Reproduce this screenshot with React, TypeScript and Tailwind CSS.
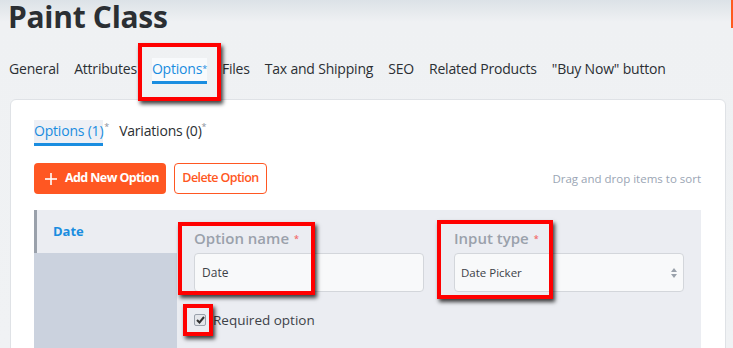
import type { ReactNode } from 'react'

// Top-level product tabs
const TABS = ['General', 'Attributes', 'Options', 'Files', 'Tax and Shipping', 'SEO', 'Related Products', '"Buy Now" button']

function RedBox({ className }: { className: string }) {
  return (
    <div
      className={`pointer-events-none absolute border-4 border-[#ff0000] shadow-[2px_3px_4px_rgba(0,0,0,0.75)] ${className}`}
    />
  )
}

function Field({ label, children }: { label: string; children: ReactNode }) {
  return (
    <div className="flex-1">
      <div className="flex items-center gap-[5px] text-[15px] font-semibold leading-[20px] text-[#9aa1ab]">
        {label}
        <span className="mt-[2px] text-[9px] leading-[10px] text-[#f26b6b]">*</span>
      </div>
      <div className="mt-[5px]">{children}</div>
    </div>
  )
}

export default function App() {
  return (
    <div
      className="relative h-[348px] w-[733px] overflow-hidden bg-[linear-gradient(#dce2e7_0px,#eff1f3_22px,#f0f2f4_100%)] font-['Open_Sans',sans-serif] text-[#2b2f33]"
    >
      {/* orange sliver on the right edge */}
      <div className="absolute right-0 top-0 h-[28px] w-[2px] bg-[#ff5a1f]" />

      <h1 className="ml-[8px] text-[30px] font-bold leading-[34px] tracking-[-0.3px] text-[#2b2f33]">
        Paint Class
      </h1>

      {/* product tabs */}
      <div className="ml-[9px] mt-[24px] flex items-end gap-[15px] text-[14px] tracking-[-0.2px] text-[#2b2f33]">
        {TABS.map((t) =>
          t === 'Options' ? (
            <div key={t} className="flex h-[26px] flex-col justify-between bg-[#f8fafc]">
              <span className="leading-[22px] text-[#1a8de0]">
                Options<span className="align-top text-[9px] text-[#1a8de0]">*</span>
              </span>
              <div className="h-[3px] bg-[#1a8de0]" />
            </div>
          ) : (
            <span key={t} className="pb-[4px] leading-[22px]">
              {t}
            </span>
          ),
        )}
      </div>

      {/* card */}
      <div className="ml-[10px] mt-[15px] h-[260px] w-[716px] rounded-[6px] border border-[#dfe2e6] bg-white pl-[23px] pr-[24px] pt-[20px]">
        {/* inner tabs */}
        <div className="flex items-end gap-[10px] text-[14px] tracking-[-0.2px]">
          <div className="flex items-start">
            <div className="flex h-[26px] flex-col justify-between bg-[#eef0f5]">
              <span className="leading-[22px] text-[#1a8de0]">Options (1)</span>
              <div className="h-[3px] bg-[#1a8de0]" />
            </div>
            <span className="ml-[1px] text-[9px] leading-[14px] text-[#8a929c]">*</span>
          </div>
          <div className="flex items-start pb-[4px]">
            <span className="leading-[22px]">Variations (0)</span>
            <span className="text-[9px] leading-[14px] text-[#8a929c]">*</span>
          </div>
        </div>

        {/* action buttons */}
        <div className="mt-[17px] flex items-center gap-[8px]">
          <button className="flex h-[31px] w-[132px] items-center gap-[8px] rounded-[4px] bg-[#ff5722] pl-[11px] text-[12.5px] font-bold tracking-[-0.6px] text-white">
            <svg width="12" height="12" viewBox="0 0 12 12" fill="none" stroke="white" strokeWidth="1.6">
              <line x1="6" y1="0" x2="6" y2="12" />
              <line x1="0" y1="6" x2="12" y2="6" />
            </svg>
            Add New Option
          </button>
          <button className="h-[31px] w-[93px] rounded-[4px] border border-[#ff5722] bg-white text-[12.5px] font-semibold tracking-[-0.6px] text-[#ff5722]">
            Delete Option
          </button>
          <span className="ml-auto text-[11.5px] text-[#9aa5b4]">Drag and drop items to sort</span>
        </div>

        {/* option editor */}
        <div className="mt-[16px] flex h-[140px] bg-[#ebedf2]">
          <div className="w-[143px] bg-[#cbd2de]">
            <div className="flex h-[43px] items-center border-l-[3px] border-[#9aa1ab] bg-[#ebedf2] pl-[16px] text-[13px] font-bold text-[#1a8de0]">
              Date
            </div>
          </div>
          <div className="flex-1 pl-[17px] pr-[17px] pt-[18px]">
            <div className="flex gap-[30px]">
              <Field label="Option name">
                <div className="flex h-[39px] items-center rounded-[4px] border border-[#d3d6db] bg-[#f8f9fa] pl-[7px] text-[12px] text-[#3d4248]">
                  Date
                </div>
              </Field>
              <Field label="Input type">
                <div className="flex h-[39px] items-center justify-between rounded-[4px] border border-[#d3d6db] bg-[#f8f9fa] pl-[6px] pr-[6px] text-[11.5px] text-[#3d4248]">
                  Date Picker
                  <svg width="6" height="10" viewBox="0 0 6 10" fill="#9aa1ab">
                    <path d="M3 0 L6 4 H0 Z" />
                    <path d="M3 10 L6 6 H0 Z" />
                  </svg>
                </div>
              </Field>
            </div>
            <label className="mt-[18px] flex items-center gap-[7px] text-[13.5px] text-[#3d4248]">
              <span className="flex h-[12px] w-[12px] items-center justify-center rounded-[2px] border border-[#9aa1ab] bg-[#e4e6ea]">
                <svg width="9" height="8" viewBox="0 0 9 8" fill="none" stroke="#333" strokeWidth="2">
                  <path d="M1 4 L3.5 6.5 L8 1" />
                </svg>
              </span>
              Required option
            </label>
          </div>
        </div>
      </div>

      {/* annotation boxes */}
      <RedBox className="left-[138px] top-[43px] h-[58px] w-[83px]" />
      <RedBox className="left-[178px] top-[222px] h-[73px] w-[137px]" />
      <RedBox className="left-[437px] top-[220px] h-[79px] w-[116px]" />
      <RedBox className="left-[183px] top-[304px] h-[32px] w-[30px]" />
    </div>
  )
}
